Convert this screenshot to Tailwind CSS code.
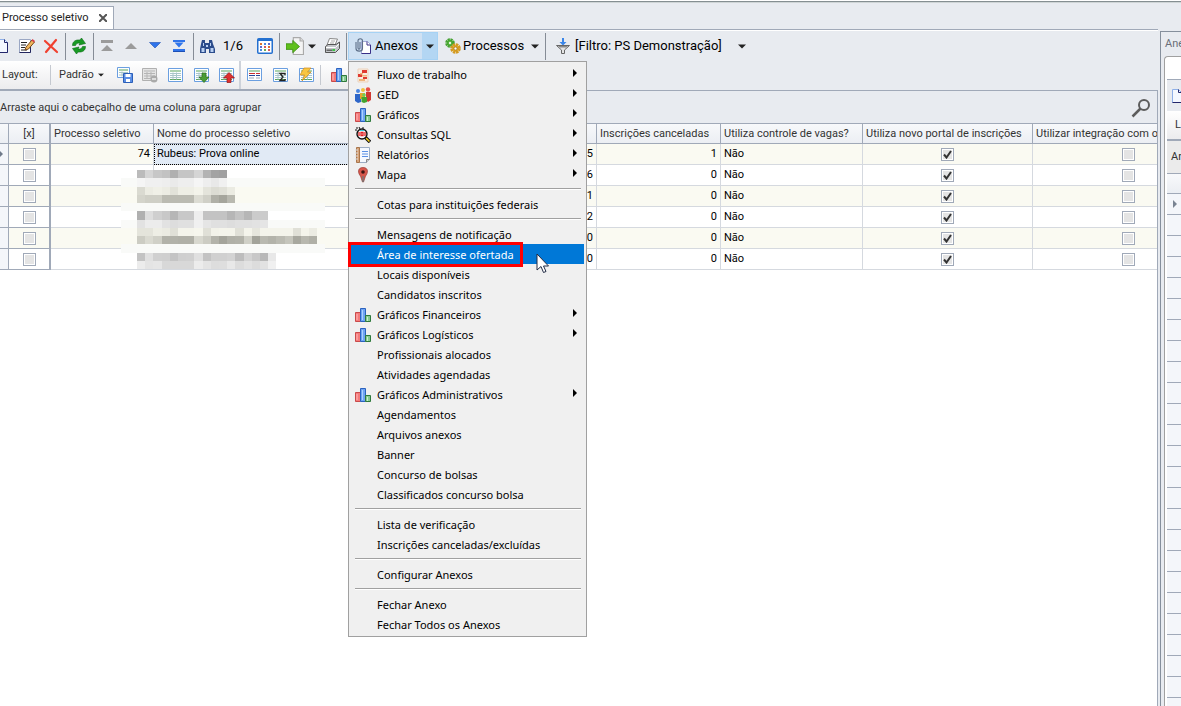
<!DOCTYPE html>
<html lang="pt-BR">
<head>
  <meta charset="UTF-8" />
  <title>Processo seletivo</title>
  <script src="https://cdn.jsdelivr.net/npm/@tailwindcss/browser@4"></script>
</head>
<body class="h-screen overflow-hidden bg-white font-[Roboto,sans-serif] text-[11px] leading-4 text-[#333]">

<svg class="hidden">
  <symbol id="doc" viewBox="0 0 16 16"><path d="M3.5 1.5h6l3 3v10h-9z" fill="#f4f8ff" stroke="#8fb0e8"/><path d="M9.500 1.500v3h3v10h-9" fill="none" stroke="#23276b"/></symbol>
  <symbol id="edit" viewBox="0 0 16 16"><path d="M.5 1.500h11v13h-11z" fill="#fff" stroke="#9aa7c4"/><path d="M.5 14.500h11v-6" stroke="#22265e" fill="none"/><path d="M2 4.500h6M2 7h5M2 9.500h4M2 12h6" stroke="#222"/><path d="m6 12 1-3 6-7 2.500 2-6 7z" fill="#f0b75c" stroke="#7a4a1c"/><path d="m12.500 2.500 1-1.500 2.500 2-1 1.500z" fill="#d8404c"/></symbol>
  <symbol id="del" viewBox="0 0 16 16"><path d="m2 3 12 11M13 2 3 14" stroke="#f04130" stroke-width="2.200" fill="none" stroke-linecap="round"/></symbol>
  <symbol id="refresh" viewBox="0 0 16 16"><path d="M1.500 7.500c0-4 3-6 7.500-5.500L10.500 0l4 5.500L8 7l1-2C6.500 4.800 5 5.500 4.500 7.500z" fill="#189a24" stroke="#0a6a14" stroke-width=".6"/><path d="M14.500 8.500c0 4-3 6-7.500 5.500L5.500 16l-4-5.500L8 9l-1 2c2.500.2 4-.5 4.500-2.500z" fill="#189a24" stroke="#0a6a14" stroke-width=".6"/></symbol>
  <symbol id="first" viewBox="0 0 16 16"><path d="M2 2h12v3H2zM8 7l6 6H2z" fill="#9b9b9b"/></symbol>
  <symbol id="up" viewBox="0 0 16 16"><path d="m8 5 6 6H2z" fill="#9b9b9b"/></symbol>
  <symbol id="down" viewBox="0 0 16 16"><path d="M2.500 4.500h11L8 10z" fill="#2f74ea" stroke="#1d4fb4" stroke-width=".6"/></symbol>
  <symbol id="last" viewBox="0 0 16 16"><path d="M2 2h12v2H2zM3.500 4.500h9L8 9.500zM2 11h12v2.500H2z" fill="#2f74ea"/><path d="M2 13.500h12" stroke="#1d4fb4"/></symbol>
  <symbol id="find" viewBox="0 0 16 16"><path d="M3 2h3v3h4V2h3l1 4 2 5v4h-6v-4H7v4H1v-4l1-5z" fill="#2b4c8c"/><path d="M2.500 10h3v4h-3zM11.500 10h3v4h-3zM4 5h1v3H4zM11 5h1v3h-1zM7 7h2v2H7z" fill="#b9d0f2"/></symbol>
  <symbol id="cal" viewBox="0 0 16 16"><rect x=".75" y=".75" width="14.500" height="14.500" rx="1" fill="#fff" stroke="#2470d0" stroke-width="1.500"/><path d="M1 1h14v2H1z" fill="#2470d0"/><path d="M3 5h2v2H3zM11 8h2v2h-2z" fill="#e0702c"/><path d="M7 5h2v2H7zM3 11h2v2H3z" fill="#4a8ae0"/><path d="M11 5h2v2h-2zM3 8h2v2H3z" fill="#5b6ad0"/><path d="M7 8h2v2H7zM11 11h2v2h-2z" fill="#d85a5a"/><path d="M7 11h2v2H7z" fill="#66ad55"/></symbol>
  <symbol id="import" viewBox="0 0 16 16"><path d="M6.500.5h6l3 3v12h-9z" fill="#f4f4f4" stroke="#aaa"/><path d="M12.500.5v3h3" fill="#ddd" stroke="#aaa"/><path d="M0 6h6V3l6 5.500L6 14v-3H0z" fill="#5fc01c" stroke="#3a8a10" stroke-width=".7"/></symbol>
  <symbol id="print" viewBox="0 0 16 16"><path d="m5.500.5 8 .5-2.500 6H3z" fill="#fff" stroke="#888"/><path d="M7 3h4M6 5h4" stroke="#aaa"/><path d="M1.500 8.500 4 6.500h8L15.500 4v6.500l-4 4h-10z" fill="#c3c6ca" stroke="#555"/><path d="M2 9.500h9.500L15 6" fill="none" stroke="#fff"/><path d="M2.500 11.500h6v1.500h-6z" fill="#666"/><path d="M8.500 11H11v2H8.500z" fill="#38c843"/></symbol>
  <symbol id="clip" viewBox="0 0 16 16"><path d="M6.500 3.500h6l3 3v9h-9z" fill="#fff" stroke="#a4abd8"/><path d="M12 3.500v3.500h3.500v8.500h-9" fill="none" stroke="#3a3088"/><path d="M5 4v6c0 1.500-2 1.500-2 0V3c0-3 4.500-3 4.500 0v7.500C7.500 14 1 14 1 10.500V4" fill="none" stroke="#5d6f88" stroke-width="1.100"/></symbol>
  <symbol id="gears" viewBox="0 0 16 16"><circle cx="5" cy="5" r="3.300" fill="#52b83a" stroke="#46a232" stroke-width="3" stroke-dasharray="2 .6"/><circle cx="10.500" cy="10.500" r="3.600" fill="#f0bc3a" stroke="#d39a22" stroke-width="3.400" stroke-dasharray="2.200 .6"/><circle cx="5" cy="5" r="1.200" fill="#e9f5e4"/><circle cx="10.500" cy="10.500" r="1.500" fill="#fff" stroke="#8a5c10" stroke-width=".6"/></symbol>
  <symbol id="funnel" viewBox="0 0 16 16"><path d="M7 0h2v4h2.500L8 7.500 4.500 4H7z" fill="#3b86e8"/><path d="M1.500 7.500h13l-5 4.500v3.500h-3V12z" fill="#e4e4e4" stroke="#666"/><path d="M3 8h10l-2 1.500H5z" fill="#888"/></symbol>
  <symbol id="grid" viewBox="0 0 16 16"><path d="M.5 1.500h14v13H.5z" fill="#fdfeff" stroke="#6b9fe0"/><path d="M2 4h11M2 12.500h11" stroke="#5ba55c"/><path d="M2 6.500h11M2 8.500h11M2 10.500h11M5 5.500v7M8.500 5.500v7" stroke="#a9c6c9" fill="none"/></symbol>
  <symbol id="gridsave" viewBox="0 0 16 16"><path d="M.5.5h12v10H.5z" fill="#fdfeff" stroke="#6b9fe0"/><path d="M2 3h9" stroke="#5ba55c"/><path d="M2 5.500h9M2 8h9M5 4.500v5" stroke="#a9c6c9"/><path d="M6.500 6.500h9v9h-9z" fill="#5b8fe6" stroke="#2c5fb8"/><path d="M8.500 7h5v3h-5zM9 12h4v3H9z" fill="#fff"/></symbol>
  <symbol id="gridoff" viewBox="0 0 16 16"><path d="M.5 1.500h14v12H.5z" fill="#e4e4e4" stroke="#b0b0b0"/><path d="M2 4h11M2 6.500h11M2 9h11M2 11.500h8M5 5v7M9 5v7" stroke="#b5b5b5"/><circle cx="12" cy="12" r="3.500" fill="#aaa"/><path d="M10 12h4" stroke="#eee" stroke-width="1.500"/></symbol>
  <symbol id="gridcard" viewBox="0 0 16 16"><path d="M.5 1.500h14v12H.5z" fill="#fdfeff" stroke="#6b9fe0"/><path d="M2 4h11" stroke="#5ba55c"/><path d="M2 6.500h6M9 6.500h4" stroke="#c83030"/><path d="M2 8.500h6M9 8.500h4" stroke="#26499a"/><path d="M2 11h5M9 11h4" stroke="#9ab"/></symbol>
  <symbol id="chart" viewBox="0 0 16 16"><path d="M.5 5.500h5v9h-5z" fill="#f47a7a" stroke="#c94a4a"/><path d="M5.500 1.500h5v13h-5z" fill="#6fa4f2" stroke="#2b62bf"/><path d="M10.500 8.500h5v6h-5z" fill="#86c892" stroke="#2e7a3c"/><path d="M2 7v6" stroke="#fbb"/><path d="M7.500 3v10" stroke="#acd0ff"/><path d="M12.500 10v4" stroke="#c8f0cc"/></symbol>
  <symbol id="flow" viewBox="0 0 16 16"><path d="M3 2h10v13H3z" fill="#faece0" stroke="#ecd3bd"/><path d="M7 3h5v3H7zM3 7h4v3H3zM8 10h4v2H8z" fill="#e03a30"/><path d="M5 6h3v1.500H5zM7 8h5v1.500H7zM4 12h6v2H4z" fill="#efb67c"/></symbol>
  <symbol id="ged" viewBox="0 0 16 16"><circle cx="3" cy="4" r="2" fill="#4a86e0"/><path d="M0 7h6v8l-3 1-3-2z" fill="#2e66c8"/><circle cx="8" cy="3" r="2" fill="#f0c040"/><path d="M5 6h5v6H5z" fill="#e8a82a"/><circle cx="13" cy="2.500" r="2.200" fill="#e85048"/><path d="M11 5h5v8l-3 2-2-2z" fill="#d03830"/><circle cx="9" cy="8" r="1.800" fill="#70cc50"/><path d="M6.500 10H12v5l-3 1-2.500-1z" fill="#43a32e"/></symbol>
  <symbol id="sql" viewBox="0 0 16 16"><path d="m10 10 5 5" stroke="#111" stroke-width="3.500"/><path d="m11 11 3.500 3.500" stroke="#f4d020" stroke-width="1.500"/><circle cx="7" cy="7" r="5" fill="#f8fbff" stroke="#111" stroke-width="1.400"/><path d="M4 5v4M6 5.500h2v3H6zM10 5v4" stroke="#e02020" stroke-width="1.300" fill="none"/><path d="M1 1h2M0 3h2M4 0l1 2M8 0v2" stroke="#111"/><path d="M5 3.500h4" stroke="#36c8d8"/></symbol>
  <symbol id="report" viewBox="0 0 16 16"><path d="M4.500.5h10v12l-3 3h-7z" fill="#f5f9ff" stroke="#9aacc4"/><path d="M1.500.5h3v15h-3z" fill="#d9a57a" stroke="#a9764c"/><path d="M0 3h3M0 6h3M0 9h3M0 12h3" stroke="#ddd"/><path d="M7 4.500h6M7 7h6M7 9.500h6" stroke="#5a90e4"/><path d="M11.500 15.500v-3h3" fill="#ccc" stroke="#888"/></symbol>
  <symbol id="map" viewBox="0 0 16 16"><path d="M8 .5c6 0 5 6 2.500 8.500L8.500 15h-1l-2-6C3 6.500 2 .5 8 .5z" fill="#d6574c" stroke="#9a3a32" stroke-width=".7"/><path d="M8 9v6" stroke="#777" stroke-width="1.500"/><circle cx="8" cy="5" r="1.800" fill="#3c1512"/></symbol>
  <symbol id="caret" viewBox="0 0 8 5"><path d="M0 .5h8L4 4.500z" fill="#222"/></symbol>
</svg>

<div class="flex h-full flex-col">
  <div class="h-[3px] shrink-0 border-b border-[#cfd5d6] border-t border-t-white bg-[#858f92]"></div>

  <div class="flex min-h-0 flex-1 bg-[#e8ebf0]">
    <main class="flex min-w-0 flex-1 flex-col">

      <div class="flex h-[27px] shrink-0 items-end border-b border-[#a0a9b8]">
        <div class="flex h-[23px] items-center gap-2.5 border-t border-r border-[#a0a9b8] bg-white pr-1.5 pl-0.5">
          <span class="whitespace-nowrap text-[#222]">Processo seletivo</span>
          <button aria-label="Fechar aba"><svg class="size-2" viewBox="0 0 8 8"><path d="m0 0 8 8M8 0 0 8" stroke="#555" stroke-width="2"/></svg></button>
        </div>
      </div>

      <!-- main toolbar -->
      <div class="-ml-[9px] flex h-[31px] shrink-0 items-center border-t border-white text-[13px] whitespace-nowrap text-black">
        <button aria-label="Novo" class="grid w-6 place-items-center"><svg class="size-4"><use href="#doc"/></svg></button>
        <button aria-label="Editar" class="grid w-6 place-items-center"><svg class="size-4"><use href="#edit"/></svg></button>
        <button aria-label="Excluir" class="grid w-6 place-items-center"><svg class="size-4"><use href="#del"/></svg></button>
        <div class="flex w-1 justify-center"><i class="h-[27px] w-px bg-[#858c96]"></i></div>
        <button aria-label="Atualizar" class="grid w-6 place-items-center"><svg class="size-4"><use href="#refresh"/></svg></button>
        <div class="flex w-1 justify-center"><i class="h-[27px] w-px bg-[#858c96]"></i></div>
        <button aria-label="Primeiro" class="grid w-6 place-items-center"><svg class="size-4"><use href="#first"/></svg></button>
        <button aria-label="Anterior" class="grid w-6 place-items-center"><svg class="size-4"><use href="#up"/></svg></button>
        <button aria-label="Próximo" class="grid w-6 place-items-center"><svg class="size-4"><use href="#down"/></svg></button>
        <button aria-label="Último" class="grid w-6 place-items-center"><svg class="size-4"><use href="#last"/></svg></button>
        <div class="flex w-1 justify-center"><i class="h-[27px] w-px bg-[#858c96]"></i></div>
        <button aria-label="Localizar" class="grid w-6 place-items-center"><svg class="size-4"><use href="#find"/></svg></button>
        <span class="w-[34px] pl-1">1/6</span>
        <button aria-label="Calendário" class="grid w-6 place-items-center"><svg class="size-4"><use href="#cal"/></svg></button>
        <div class="flex w-1 justify-center"><i class="h-[27px] w-px bg-[#858c96]"></i></div>
        <button aria-label="Exportar" class="flex w-[39px] items-center justify-center gap-1"><svg class="size-[18px]"><use href="#import"/></svg><svg class="h-[5px] w-2"><use href="#caret"/></svg></button>
        <button aria-label="Imprimir" class="grid w-6 place-items-center"><svg class="size-4"><use href="#print"/></svg></button>
        <div class="flex w-1 justify-center"><i class="h-[27px] w-px bg-[#858c96]"></i></div>

        <div class="relative">
          <div class="flex h-7 border border-[#a6d2f4] bg-[#cfe1f3]">
            <button class="flex w-[73px] items-center gap-1 pl-1.5"><svg class="size-4 shrink-0"><use href="#clip"/></svg>Anexos</button>
            <button aria-label="Abrir anexos" class="grid w-[15px] place-items-center bg-[#b3d6f3]"><svg class="h-[5px] w-2"><use href="#caret"/></svg></button>
          </div>
          <div id="menu" role="menu" class="absolute top-[29px] left-0 z-10 w-[239px] border border-[#a0a0a0] bg-[#f0f0f0] py-0.5 font-['Noto_Sans',sans-serif] text-[11px] text-black"></div>
        </div>

        <button class="flex w-[89px] items-center gap-0.5 pl-[7px]"><svg class="size-4 shrink-0"><use href="#gears"/></svg>Processos</button>
        <button aria-label="Abrir processos" class="grid w-4 place-items-center"><svg class="h-[5px] w-2"><use href="#caret"/></svg></button>
        <div class="flex w-1 justify-center"><i class="h-[27px] w-px bg-[#858c96]"></i></div>
        <button class="flex items-center gap-1 pl-2"><svg class="size-4 shrink-0"><use href="#funnel"/></svg>[Filtro: PS Demonstração]<svg class="ml-3 h-[5px] w-2"><use href="#caret"/></svg></button>
      </div>

      <!-- layout toolbar -->
      <div class="flex h-[29px] w-[400px] shrink-0 items-center border-b border-[#a0a9b8] bg-linear-to-b from-white to-[#ececee]">
        <span class="w-[50px] pl-0.5">Layout:</span>
        <i class="h-5 w-px bg-[#c5c9d0]"></i>
        <button class="flex w-[61px] items-center gap-1 pl-2">Padrão<svg class="h-1 w-1.5" viewBox="0 0 8 5"><use href="#caret"/></svg></button>
        <button aria-label="Salvar layout" class="grid w-[25px] place-items-center"><svg class="size-4"><use href="#gridsave"/></svg></button>
        <button aria-label="Remover layout" class="grid w-[26px] place-items-center"><svg class="size-4"><use href="#gridoff"/></svg></button>
        <button aria-label="Colunas" class="grid w-[26px] place-items-center"><svg class="size-4"><use href="#grid"/></svg></button>
        <button aria-label="Importar layout" class="grid w-[25px] place-items-center"><svg class="size-4" viewBox="0 0 16 16"><use href="#grid"/><path d="M8 6h4v4h3l-5 5.500L5 10h3z" fill="#4a9c34" stroke="#2c6c1c" stroke-width=".7"/></svg></button>
        <button aria-label="Exportar layout" class="grid w-[25px] place-items-center"><svg class="size-4" viewBox="0 0 16 16"><use href="#grid"/><path d="M8 15.500h4V11h3.500L10 5.500 4.500 11H8z" fill="#e03030" stroke="#8a1414" stroke-width=".7"/></svg></button>
        <i class="h-full w-0.5 bg-[#cdd2da]"></i>
        <button aria-label="Cartões" class="grid w-[27px] place-items-center"><svg class="size-4"><use href="#gridcard"/></svg></button>
        <button aria-label="Totais" class="grid w-[26px] place-items-center"><svg class="size-4" viewBox="0 0 16 16"><use href="#grid"/><path d="M12 8V6.500H7L10 10l-3 3.500h5V12" fill="none" stroke="#222" stroke-width="1.300"/></svg></button>
        <button aria-label="Formatação" class="grid w-[26px] place-items-center"><svg class="size-4" viewBox="0 0 16 16"><use href="#grid"/><path d="M5 1h7L8.500 5H12l-9 9 2.500-6H1z" fill="#f8c640" stroke="#d08a1c" stroke-width=".7"/></svg></button>
        <i class="h-5 w-px bg-[#c5c9d0]"></i>
        <button aria-label="Gráficos" class="grid w-9 place-items-center"><svg class="size-4"><use href="#chart"/></svg></button>
      </div>

      <!-- data grid -->
      <div class="flex min-h-0 flex-1 flex-col overflow-hidden border-t border-r border-[#a0a9b8] bg-white">
        <div class="flex h-8 shrink-0 items-center justify-between bg-[#e8ebf0] pt-0.5 pr-1.5">
          <span>Arraste aqui o cabeçalho de uma coluna para agrupar</span>
          <button aria-label="Pesquisar"><svg class="size-5" viewBox="0 0 20 20" fill="none" stroke="#5c5c5c"><circle cx="13" cy="7" r="5" stroke-width="2"/><path d="m9.500 10.500-8 8" stroke-width="2.500"/></svg></button>
        </div>
        <div class="relative">
          <table class="w-full table-fixed border-separate border-spacing-0 whitespace-nowrap">
            <colgroup>
              <col class="w-[9px]"><col class="w-[42px]"><col class="w-[103px]"><col class="w-[195px]"><col class="w-[248px]"><col class="w-[124px]"><col class="w-[142px]"><col class="w-[170px]"><col>
            </colgroup>
            <thead class="bg-linear-to-b from-[#f8f9fb] to-[#ebeef3]">
              <tr class="h-[21px] text-left *:border-y *:border-r *:border-[#a0a9b8] *:p-0 *:pl-[3px] *:font-normal">
                <th></th>
                <th class="border-r-2! pl-0! text-center">[x]</th>
                <th>Processo seletivo</th>
                <th>Nome do processo seletivo</th>
                <th></th>
                <th>Inscrições canceladas</th>
                <th>Utiliza controle de vagas?</th>
                <th>Utiliza novo portal de inscrições</th>
                <th class="border-r-0!">Utilizar integração com o</th>
              </tr>
            </thead>
            <tbody id="rows" class="text-black"></tbody>
          </table>
          <!-- redacted records -->
          <svg id="redacted" aria-hidden="true" class="absolute top-[47px] left-[121px] h-[99px] w-[204px]" viewBox="0 0 204 99" shape-rendering="crispEdges"></svg>
        </div>
      </div>
    </main>

    <div class="w-0.5 shrink-0"></div>

    <!-- docked panel -->
    <aside class="flex w-[21px] shrink-0 flex-col overflow-hidden pt-7 whitespace-nowrap">
      <div class="flex min-h-0 w-44 flex-1 flex-col border-t border-l border-[#858f9c] pl-[3px]">
        <div class="flex h-6 shrink-0 items-center pl-px text-[#6a6f78]">Ane</div>
        <div class="flex min-h-0 flex-1 flex-col rounded-tl border-t border-l border-[#a0a0a0] bg-white pl-0.5">
          <div class="h-[23px] shrink-0 border-b border-[#a0a9b8]"></div>
          <div class="flex h-[31px] shrink-0 items-center bg-[#e8ebf0] pl-0.5"><svg class="size-4"><use href="#doc"/></svg></div>
          <div class="flex h-[30px] shrink-0 items-center border-b-2 border-[#a0a9b8] bg-linear-to-b from-white to-[#ececee] pl-2">L</div>
          <div class="flex h-[33px] shrink-0 items-center border-b border-[#a0a9b8] bg-[#ebebeb] pl-1">Ar</div>
          <div class="h-5 shrink-0 border-b border-[#a0a9b8] bg-linear-to-b from-[#f8f9fb] to-[#ebeef3]"></div>
          <div id="dock"></div>
        </div>
      </div>
    </aside>
  </div>
</div>

<svg class="absolute top-[253px] left-[536px] z-20 h-[21px] w-3.5" viewBox="0 0 14 21"><path d="M1 1v16l4-3.500 2.500 6 2.500-1-2.500-5.500h5z" fill="#fff" stroke="#222c44"/></svg>

<script>
  // [label, icon, has submenu]; null is a separator
  const items = [
    ["Fluxo de trabalho", "flow", true], ["GED", "ged", true], ["Gráficos", "chart", true],
    ["Consultas SQL", "sql", true], ["Relatórios", "report", true], ["Mapa", "map", true],
    null, ["Cotas para instituições federais"],
    null, ["Mensagens de notificação"], ["Área de interesse ofertada"], ["Locais disponíveis"],
    ["Candidatos inscritos"], ["Gráficos Financeiros", "chart", true], ["Gráficos Logísticos", "chart", true],
    ["Profissionais alocados"], ["Atividades agendadas"], ["Gráficos Administrativos", "chart", true],
    ["Agendamentos"], ["Arquivos anexos"], ["Banner"], ["Concurso de bolsas"], ["Classificados concurso bolsa"],
    null, ["Lista de verificação"], ["Inscrições canceladas/excluídas"],
    null, ["Configurar Anexos"],
    null, ["Fechar Anexo"], ["Fechar Todos os Anexos"],
  ];

  document.getElementById("menu").innerHTML = items.map((item) => {
    if (!item) return `<div role="separator" class="flex h-2.5 items-center pr-[5px] pl-1.5"><div class="h-0.5 w-full border-t border-[#a0a0a0] bg-white"></div></div>`;
    const [label, icon, sub] = item;
    const active = label === "Área de interesse ofertada";
    return `<button role="menuitem" class="relative flex h-5 w-full items-center gap-1.5 pt-0.5 pl-1.5 text-left ${active ? "text-white" : ""}">
      ${active ? `<span class="absolute inset-y-0 right-0.5 left-px bg-[#0078d7]"></span>` : ""}
      <span class="size-4 shrink-0">${icon ? `<svg class="size-4"><use href="#${icon}"/></svg>` : ""}</span>
      <span class="relative flex-1">${label}</span>
      ${sub ? `<svg class="mr-[9px] mb-1 h-2 w-1" viewBox="0 0 4 8"><path d="M0 0v8l4-4z"/></svg>` : ""}
      ${active ? `<span class="absolute -top-0.5 -left-px h-[25px] w-[175px] border-3 border-[#ff0000]"></span>` : ""}
    </button>`;
  }).join("");

  const check = (label, on) => `<span class="grid h-[18px] place-items-center *:col-start-1 *:row-start-1">
    <input type="checkbox" aria-label="${label}" ${on ? "checked" : ""} class="size-[13px] appearance-none border border-[#a0a9b8] bg-[#e4e4e4] outline outline-1 -outline-offset-2 outline-white">
    ${on ? `<svg class="pointer-events-none size-[9px]" viewBox="0 0 9 9"><path d="M1 4.500 3.500 7.500 8 1" fill="none" stroke="#333" stroke-width="2"/></svg>` : ""}
  </span>`;

  const data = [
    { id: 74, nome: "Rubeus: Prova online", insc: 5, canc: 1 },
    { id: "", nome: "", insc: 6, canc: 0 },
    { id: "", nome: "", insc: 1, canc: 0 },
    { id: "", nome: "", insc: 2, canc: 0 },
    { id: "", nome: "", insc: 0, canc: 0 },
    { id: "", nome: "", insc: 0, canc: 0 },
  ];

  document.getElementById("rows").innerHTML = data.map((r, i) => `
    <tr class="h-[21px] *:border-r *:border-b *:border-[#d5d9df] *:p-0 *:px-[3px] ${i % 2 ? "bg-white" : "bg-[#fafaf2]"}">
      <td class="border-[#a0a9b8]! bg-[#f4f6fa] px-0!">${i === 0 ? `<svg class="h-2 w-1" viewBox="0 0 4 8"><path d="M0 1v6l3-3z" fill="#6f7a8a"/></svg>` : ""}</td>
      <td class="border-r-2! border-[#a0a9b8]!">${check("Selecionar", false)}</td>
      <td class="text-right">${r.id}</td>
      <td class="${i === 0 ? "outline-1 -outline-offset-1 outline-dotted outline-black bg-[#e1eaf5]" : ""}">${r.nome}</td>
      <td class="text-right">${r.insc}</td>
      <td class="text-right">${r.canc}</td>
      <td>Não</td>
      <td>${check("Utiliza novo portal de inscrições", true)}</td>
      <td class="border-r-0! pl-[70px]!">${check("Utilizar integração", false)}</td>
    </tr>`).join("");

  document.getElementById("dock").innerHTML = Array.from({ length: 25 }, (_, i) =>
    `<div class="flex h-[21px] items-center border-b border-[#a0a9b8] bg-[#f4f6fa] pl-1.5">${i === 0 ? `<svg class="h-2 w-1" viewBox="0 0 4 8"><path d="M0 0v8l4-4z" fill="#7a8492"/></svg>` : ""}</div>`).join("");

  // grey level of each block, two hex digits per block
  const blocks = [
    "bbd5c7c2b0c5c5d5b3a3a0",
    "f5f0f0eeeaeeeef5eee8f0",
    "daecf0ece2eeeef3e4dce0eb",
    "d4cfcfbbbbbbbbdcd0b0a5b9",
    "",
    "b0ddcfc8b6c8c8eec3c3c3b6c3b6cbcb",
    "e2ecece2dde0e0f0e5e0e0dde0e0e2e5",
    "e4e4eeebe0f4f4f6e0f2f4f4e0f4e6f4f4f4f4e0f4ec",
    "ccdad0b2b2b0b0d8ccb3a4b0b2d0a3b9b3bbc5a8b8b0",
    "",
    "c3e0d0cfc4cfd0e0c3d0d0d3bdd3c8b8e8",
    "ece4e6d8d8d8d8ece4dddee8dce2dce2f0",
  ];
  const tinted = [2, 3, 7, 8];
  let rects = "";
  for (const y of [1, 4, 6, 9]) rects += `<rect x="0" y="${y * 8.25}" width="204" height="8.25" fill="#f9faf8"/>`;
  blocks.forEach((row, y) => {
    (row.match(/../g) || []).forEach((g, x) => {
      const b = tinted.includes(y) ? (parseInt(g, 16) - 9).toString(16) : g;
      rects += `<rect x="${16 + x * 8.2}" y="${y * 8.25}" width="8.2" height="8.25" fill="#${g}${g}${b}"/>`;
    });
  });
  document.getElementById("redacted").innerHTML = rects;
</script>
</body>
</html>
